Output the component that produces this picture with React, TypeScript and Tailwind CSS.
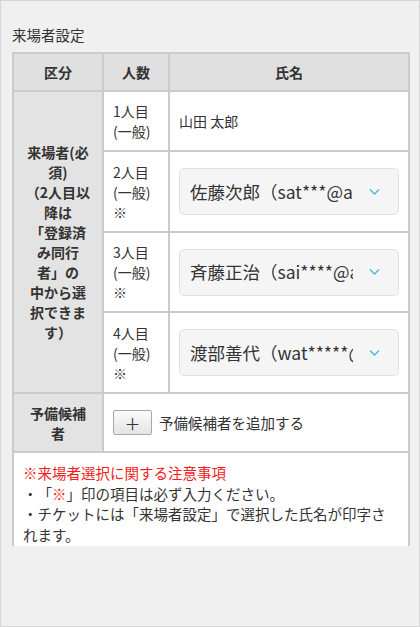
const visitors = [
  { no: '2人目', name: '佐藤次郎（sat***@abc.jp）' },
  { no: '3人目', name: '斉藤正治（sai****@abc.jp）' },
  { no: '4人目', name: '渡部善代（wat*****@abc.jp）' },
];

const noteLines = [
  '来場者(必',
  '須)',
  '（2人目以',
  '降は',
  '「登録済',
  'み同行',
  '者」の',
  '中から選',
  '択できま',
  'す）',
];

function Chevron() {
  return (
    <svg width="11" height="7" viewBox="0 0 11 7" fill="none">
      <polyline points="1,1 5.5,5.5 10,1" stroke="#45bdd6" strokeWidth="1.4" />
    </svg>
  );
}

function NameSelect({ value }: { value: string }) {
  return (
    <div className="relative flex h-[47px] w-full items-center rounded-[5px] border border-[#e2e2e2] bg-[#f5f5f5] pl-[10px]">
      <span className="w-[163px] shrink-0 overflow-hidden whitespace-nowrap text-[17.5px] text-[#333]">{value}</span>
      <span className="absolute right-[18px] top-1/2 -translate-y-1/2">
        <Chevron />
      </span>
    </div>
  );
}

export default function App() {
  return (
    <div
      className="h-[627px] w-[420px] border border-[#d6d6d6] bg-[#f0f0f0] pt-[24px] text-[#333] [text-spacing-trim:space-all]"
      style={{ fontFamily: '"Noto Sans CJK JP", "Noto Sans", sans-serif' }}
    >
      <div className="pl-[11px] text-[14.5px] leading-[20px]">来場者設定</div>

      <div className="ml-[11px] mt-[7px] w-[398px]">
        <div className="grid grid-cols-[88px_64px_238px] grid-rows-[36px_58px_79px_78px_79px_57px] gap-[2px] bg-[#cbcbcb] p-[2px] text-[14px] leading-[20px]">
          <div className="flex items-center justify-center bg-[#e0e0e0] font-bold">区分</div>
          <div className="flex items-center justify-center bg-[#e0e0e0] font-bold">人数</div>
          <div className="flex items-center justify-center bg-[#e0e0e0] font-bold">氏名</div>

          <div className="row-span-4 flex flex-col items-center justify-center bg-[#e3e3e3] font-bold">
            {noteLines.map((l) => (
              <span key={l} className="whitespace-nowrap">
                {l}
              </span>
            ))}
          </div>

          <div className="flex flex-col justify-center bg-white pl-[9px]">
            <span>1人目</span>
            <span>(一般)</span>
          </div>
          <div className="flex items-center bg-white pl-[9px]">山田 太郎</div>

          {visitors.map((v) => (
            <div key={v.no} className="contents">
              <div className="flex flex-col justify-center bg-white pl-[9px]">
                <span>{v.no}</span>
                <span>(一般)</span>
                <span>※</span>
              </div>
              <div className="flex items-center bg-white px-[9px]">
                <NameSelect value={v.name} />
              </div>
            </div>
          ))}

          <div className="flex flex-col items-center justify-center bg-[#e3e3e3] font-bold">
            <span>予備候補</span>
            <span>者</span>
          </div>
          <div className="col-span-2 flex items-center gap-[7px] bg-white pl-[9px]">
            <button className="flex h-[25px] w-[39px] items-center justify-center rounded-[2px] border border-[#a8a8a8] bg-gradient-to-b from-[#fbfbfb] to-[#e4e4e4] text-[16px] leading-none text-[#333]">
              ＋
            </button>
            <span className="text-[14.5px]">予備候補者を追加する</span>
          </div>
        </div>

        <div className="border-x-2 border-[#cbcbcb] bg-white px-[9px] pb-[1px] pt-[10px] text-[14.5px] leading-[20.5px]">
          <p className="text-[#f41c1c]">※来場者選択に関する注意事項</p>
          <p>
            ・「<span className="text-[#f41c1c]">※</span>」印の項目は必ず入力ください。
          </p>
          <p>・チケットには「来場者設定」で選択した氏名が印字されます。</p>
        </div>
      </div>
    </div>
  );
}
